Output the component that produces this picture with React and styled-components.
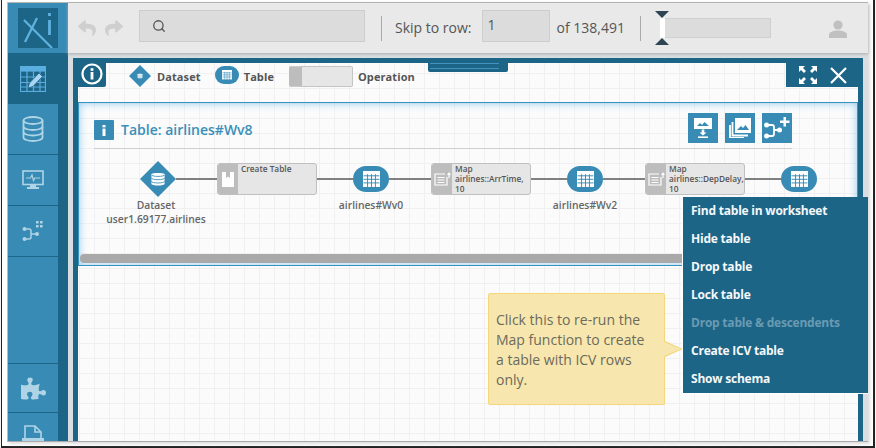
import React from "react";
import styled, { createGlobalStyle } from "styled-components";
import { FaReply, FaShare, FaPuzzlePiece } from "react-icons/fa";
import { Search } from "lucide-react";

const dark = "#1d6587";
const blue = "#378bb5";
const sideIcon = "#afd4e6";

const Global = createGlobalStyle`
  html, body { margin: 0; padding: 0; background: #fff; }
  body { font-family: "Open Sans", "Liberation Sans", sans-serif; }
  * { box-sizing: border-box; }
`;

const Screen = styled.div`
  width: 876px; height: 448px; overflow: hidden; padding-left: 1px; background: #f4f4f4;
`;
const WindowEdge = styled.div`
  width: 874px; height: 448px; display: flex; align-items: flex-start;
  border-left: 1px solid #222; border-right: 2px solid #222; border-bottom: 2px solid #222;
  background: #fff; padding: 2px 0 0 5px;
`;
const App = styled.div`
  position: relative; width: 861px; height: 440px; display: flex; flex: none;
  border-top: 1px solid #b5b5b5; border-bottom: 1px solid #aaa; border-left: 1px solid #bbb;
  box-shadow: 2px 2px 3px #ddd;
`;
const Sidebar = styled.aside`
  width: 60px; flex: none; background: ${dark}; display: flex; flex-direction: column;
`;
const LogoCell = styled.div`
  height: 50px; background: ${blue}; display: flex; justify-content: center; align-items: center; flex: none;
`;
const NavActive = styled.div`
  height: 51px; flex: none; width: 50px; display: flex; align-items: center; justify-content: center;
`;
const NavItem = styled.div`
  height: ${(p) => p.$h || 51}px; flex: none; width: 50px; background: ${blue};
  border-bottom: 1px solid ${dark}; display: flex; align-items: center; justify-content: center; overflow: hidden;
  color: ${sideIcon};
`;
const NavFill = styled.div`
  flex: 1; width: 50px; background: ${blue}; border-bottom: 1px solid ${dark};
`;
const NavCut = styled.div`
  flex: none; height: 28px; width: 50px; background: ${blue}; overflow: hidden; display: flex; justify-content: center; padding-top: 12px;
`;
const Body = styled.div`
  flex: 1; min-width: 0; display: flex; flex-direction: column; background: #d8dee1;
`;
const Header = styled.header`
  height: 50px; flex: none; background: #e9e9e9; display: flex; align-items: center; padding-left: 10px;
  box-shadow: 0 1px 3px #aaa; color: #555; font-size: 14px; position: relative;
`;
const History = styled.div`
  width: 61px; display: flex; gap: 9px; color: #cfcfcf; font-size: 18px; align-items: center; flex: none;
`;
const SearchBox = styled.div`
  width: 226px; height: 32px; background: #dcdcdc; border: 1px solid #cdcdcd; display: flex; align-items: center;
  padding-left: 12px; color: #555; flex: none; margin-top: -4px;
`;
const Divider = styled.div`
  width: 1px; height: 25px; background: #aaa; flex: none; margin: 0 ${(p) => p.$r}px 0 ${(p) => p.$l}px;
`;
const SkipLabel = styled.span`white-space: nowrap; flex: none; margin-top: -1px;`;
const RowInput = styled.div`
  width: 68px; height: 32px; background: #dcdcdc; border: 1px solid #cdcdcd; margin: -4px 7px 0 10px; padding: 4px 0 0 5px; flex: none;
`;
const Slider = styled.div`
  position: relative; width: 110px; height: 20px; background: #dcdcdc; border: 1px solid #d0d0d0; flex: none;
`;
const Handle = styled.div`
  position: absolute; left: -2px; top: -1px; width: 5px; height: 20px; background: #fff;
  &::before, &::after {
    content: ""; position: absolute; left: -5px; border-left: 7px solid transparent; border-right: 7px solid transparent;
  }
  &::before { top: -7px; border-top: 7px solid #2d4452; }
  &::after { bottom: -7px; border-bottom: 7px solid #2d4452; }
`;
const UserSlot = styled.div`margin-left: 58px; display: flex; flex: none; margin-top: 1px;`;

const Panel = styled.main`
  position: relative; margin: 5px 5px 0 5px; flex: 1; min-height: 0; border: 5px solid ${dark}; border-bottom: none;
  background-color: #fbfbfb;
  background-image: linear-gradient(#f0f0f0 1px, transparent 1px), linear-gradient(90deg, #f0f0f0 1px, transparent 1px);
  background-size: 15px 15px; background-position: 1px 10px;
`;
const Legend = styled.div`
  height: 24px; display: flex; align-items: center; font-size: 11px; font-weight: 700; color: #555; letter-spacing: 0.1px;
`;
const InfoTab = styled.div`
  width: 28px; height: 24px; background: ${dark}; display: flex; justify-content: center; border-bottom-right-radius: 2px; flex: none;
  align-self: flex-start; color: #fff;
`;
const LegendDiamond = styled.div`margin: 2px 6px 0 23px; display: flex;`;
const LegendName = styled.span`margin-top: 2px;`;
const LegendPill = styled.div`
  width: 24px; height: 18px; border-radius: 9px; background: ${blue}; margin: 0 5px 0 14px; display: flex; align-items: center; justify-content: center;
`;
const LegendOp = styled.div`
  width: 64px; height: 21px; margin: 3px 5px 0 15px; border: 1px solid #c4c4c4; border-radius: 2px; background: #e6e6e6; flex: none;
  border-left: 13px solid #bdbdbd;
`;
const PullTab = styled.div`
  position: absolute; left: 350px; top: 0; width: 80px; height: 9px; background: ${dark}; border-bottom-left-radius: 2px; border-bottom-right-radius: 2px;
  &::after { content: ""; position: absolute; left: 2px; right: 9px; top: 0; height: 4px; border-bottom: 1px solid #3f93bd; border-top: 1px solid #3f93bd; }
`;
const WinTab = styled.div`
  position: absolute; right: 0; top: 0; width: 72px; height: 24px; background: ${dark}; display: flex; align-items: center; gap: 12px; padding-left: 12px;
`;
const Card = styled.section`
  height: 164px; margin-top: 15px; border: 1px solid #3a92c0; box-shadow: inset 0 0 8px #8fcbf0; display: flex; flex-direction: column; padding: 10px 0 1px 1px;
`;
const CardHead = styled.div`
  margin-left: 14px; width: 698px; height: 36px; border-bottom: 1px solid #cfcfcf; display: flex; align-items: flex-start; flex: none;
`;
const CardInfo = styled.div`
  width: 20px; height: 20px; background: ${blue}; border-radius: 1px; display: flex; align-items: center; justify-content: center; margin-top: 7px; flex: none;
`;
const CardTitle = styled.h2`
  margin: 6px 0 0 7px; font-size: 14px; font-weight: 600; line-height: 22px; color: #3a8fb9; flex: 1;
`;
const ActionGroup = styled.div`display: flex; gap: 7px;`;
const ActionBtn = styled.div`
  width: 30px; height: 30px; background: ${blue}; display: flex; align-items: center; justify-content: center; flex: none;
`;
const Graph = styled.div`
  display: flex; margin: 14px 0 0 60px; align-items: flex-start; flex: none;
`;
const Node = styled.div`
  width: 36px; flex: none; display: flex; flex-direction: column; align-items: center;
`;
const ShapeSlot = styled.div`
  height: 32px; display: flex; align-items: center; justify-content: center;
`;
const NodeLabel = styled.div`
  margin: 3px ${(p) => p.$shift || 0}px 0 0; font-size: 10.3px; line-height: 14px; font-weight: 600; color: #666; white-space: nowrap; text-align: center;
`;
const Pill = styled.div`
  width: 36px; height: 26px; border-radius: 13px; background: ${blue}; display: flex; align-items: center; justify-content: center; flex: none;
`;
const Wire = styled.div`
  width: ${(p) => p.$w}px; height: 2px; margin-top: 15px; background: #808080; flex: none;
`;
const OpBox = styled.div`
  width: 100px; height: 32px; flex: none; display: flex; border: 1px solid #c0c0c0; border-radius: 3px; background: #e6e6e6; overflow: hidden;
`;
const OpIcon = styled.div`
  width: 20px; flex: none; background: #bdbdbd; display: flex; align-items: center; justify-content: center;
`;
const OpText = styled.div`
  padding: 0 0 0 3px; font-size: 8.3px; line-height: 10px; font-weight: 600; color: #555; white-space: nowrap;
`;
const ScrollBar = styled.div`
  margin-top: auto; height: 9px; background: #a9a9a9; border-radius: 4px; margin-right: 1px; margin-bottom: 1px;
`;

const Menu = styled.ul`
  position: absolute; left: 674px; top: 194px; width: 186px; margin: 0; padding: 0; list-style: none; background: ${dark};
  border-left: 1px solid #fff; border-bottom: 1px solid #fff; height: 197px;
`;
const MenuItem = styled.li`
  height: 28px; line-height: 28px; padding-left: 8px; font-size: 12px; font-weight: 700; letter-spacing: -0.22px;
  color: ${(p) => (p.$off ? "#6a9bb2" : "#f4f8fa")};
`;
const Tip = styled.div`
  position: absolute; left: 480px; top: 290px; width: 177px; height: 112px; background: #f7e7ae; border: 1px solid #f5d67a; border-radius: 2px;
  padding: 16px 0 0 7px; font-size: 14px; line-height: 20px; color: #6d6a5c; white-space: nowrap;
  &::before, &::after { content: ""; position: absolute; border-style: solid; border-color: transparent; }
  &::before { left: 176px; top: 47px; border-width: 8px 0 8px 18px; border-left-color: #f5d67a; }
  &::after { left: 175px; top: 48px; border-width: 7px 0 7px 17px; border-left-color: #f7e7ae; }
`;

const Logo = () => (
  <svg width="40" height="40" viewBox="0 0 40 40" style={{ background: dark }}>
    <g stroke="#5fb2de" strokeWidth="2.2" fill="none">
      <path d="M6 12 L34 40" />
      <path d="M19 10 L7 34" />
      <path d="M31.5 12 V27" strokeWidth="2.8" />
      <path d="M31.5 5 V8" strokeWidth="2.8" />
    </g>
  </svg>
);
const SheetIcon = () => (
  <svg width="26" height="26" viewBox="0 0 26 26" fill="none" stroke="#5aaee0" strokeWidth="1.2">
    <rect x="0.5" y="0.5" width="25" height="25" />
    <rect x="0" y="0" width="26" height="5" fill="#5aaee0" />
    <path d="M0 11H26M0 16.5H26M0 21H26M7 5V26M13.5 5V26M20 5V26" />
    <path d="M8 22 L9.5 17 L19 7 L22.5 10.5 L13 20.5Z" fill="#a8d6f2" stroke={dark} strokeWidth="0.8" />
  </svg>
);
const DbIcon = () => (
  <svg width="22" height="26" viewBox="0 0 22 26" fill="none" stroke={sideIcon} strokeWidth="1.8">
    <ellipse cx="11" cy="4.5" rx="9.5" ry="3.5" />
    <path d="M1.5 4.5V21.5C1.5 23.5 6 25 11 25S20.5 23.5 20.5 21.5V4.5" />
    <path d="M1.5 10.5C1.5 12.5 6 14 11 14S20.5 12.5 20.5 10.5M1.5 16C1.5 18 6 19.5 11 19.5S20.5 18 20.5 16" />
  </svg>
);
const MonitorIcon = () => (
  <svg width="22" height="20" viewBox="0 0 22 20" fill="none" stroke={sideIcon}>
    <rect x="1" y="1" width="20" height="13.5" strokeWidth="1.6" />
    <path d="M4 8H8.5L10 5L11.5 10.5L12.8 8H18" strokeWidth="1.2" />
    <path d="M8 15H14V17H17V19H5V17H8Z" fill={sideIcon} stroke="none" />
  </svg>
);
const GraphDots = () => (
  <svg width="22" height="22" viewBox="0 0 22 22" fill={sideIcon} stroke="none">
    <circle cx="2.5" cy="9" r="2" />
    <circle cx="2.5" cy="19" r="2" />
    <circle cx="15" cy="14" r="2" />
    <path d="M2.5 9H7Q9 9 9 11V17Q9 19 7 19H2.5M9 14H15" fill="none" stroke={sideIcon} strokeWidth="1.5" />
    <path d="M14 1h2.6v2.6H14zM18 1h2.6v2.6H18zM14 5h2.6v2.6H14zM18 5h2.6v2.6H18z" />
  </svg>
);
const FileCut = () => (
  <svg width="22" height="26" viewBox="0 0 22 26" fill="none" stroke={sideIcon} strokeWidth="1.6">
    <path d="M3 13V1H13L19 7V13" />
    <path d="M13 1V7H19" />
    <rect x="0" y="13" width="22" height="10" fill={sideIcon} stroke="none" />
  </svg>
);
const InfoRing = () => (
  <svg width="22" height="22" viewBox="0 0 22 22">
    <circle cx="11" cy="11" r="9.5" fill="none" stroke="#fff" strokeWidth="2.2" />
    <rect x="9.6" y="9" width="2.8" height="7.5" fill="#fff" />
    <rect x="9.6" y="5.2" width="2.8" height="2.6" fill="#fff" />
  </svg>
);
const InfoGlyph = () => (
  <svg width="4" height="11" viewBox="0 0 4 11" fill="#fff">
    <rect x="0.5" y="0" width="3" height="2.4" />
    <rect x="0.5" y="3.6" width="3" height="7.4" />
  </svg>
);
const TableGlyph = ({ s = 16 }) => (
  <svg width={s} height={s * 0.94} viewBox="0 0 16 15" fill="none">
    <rect x="0" y="0" width="16" height="15" fill="#fff" />
    <path d="M0.5 4.5H15.5M0.5 7.8H15.5M0.5 11.2H15.5M4.3 3V15M8 3V15M11.7 3V15" stroke={blue} strokeWidth="0.9" />
  </svg>
);
const DbInner = ({ s }) => (
  <g transform={`scale(${s / 16})`} stroke={blue} strokeWidth="0.9">
    <path d="M1 3C1 1 15 1 15 3V13C15 15.5 1 15.5 1 13Z" stroke="none" fill="#fff" />
    <path d="M1 3.5C1 5.8 15 5.8 15 3.5M1 7C1 9.3 15 9.3 15 7M1 10.5C1 12.8 15 12.8 15 10.5" fill="none" />
  </g>
);
const Diamond = ({ size, glyph }) => (
  <svg width={size} height={size} viewBox="0 0 36 36" style={{ flex: "none" }}>
    <path d="M18 0 L36 18 L18 36 L0 18Z" fill={blue} />
    <g transform={`translate(${18 - glyph / 2} ${18 - glyph / 2})`}>
      <DbInner s={glyph} />
    </g>
  </svg>
);
const CreateGlyph = () => (
  <svg width="12" height="15" viewBox="0 0 12 15">
    <rect width="12" height="15" fill="#fff" />
    <path d="M4 0H8V6L6 4.6L4 6Z" fill="#bdbdbd" />
  </svg>
);
const MapGlyph = () => (
  <svg width="17" height="14" viewBox="0 0 17 14" fill="none" stroke="#fff" strokeWidth="1.2">
    <path d="M11 2H1V13H13V5" />
    <path d="M3.5 5.5H10.5M3.5 8H10.5M3.5 10.5H10.5" />
    <path d="M15 0 L17 3H15.6V6H14.4V3H13Z" fill="#fff" stroke="none" />
  </svg>
);
const ExportBtn = () => (
  <svg width="20" height="20" viewBox="0 0 20 20" fill="#fff">
    <path d="M1 0H19V11H1Z" />
    <path d="M4 8L7 5L9 7L11.5 4L16 8Z" fill={blue} />
    <path d="M8.7 11.5H11.3V14.5H13.5L10 17.5L6.5 14.5H8.7Z" />
    <rect x="5" y="18.4" width="10" height="1.6" />
  </svg>
);
const ImagesBtn = () => (
  <svg width="22" height="20" viewBox="0 0 22 20" fill="none">
    <path d="M6 0H22V15H6Z" fill="#fff" />
    <path d="M8 12L12 8L14 10L16.5 7L20 12Z" fill={blue} />
    <path d="M3.5 4V17.5H19M1 7V20H15" stroke="#fff" strokeWidth="1.8" />
  </svg>
);
const GraphPlusBtn = () => (
  <svg width="26" height="22" viewBox="0 0 26 22" fill="#fff" stroke="none">
    <circle cx="2.6" cy="8" r="2.5" />
    <circle cx="2.6" cy="19" r="2.5" />
    <circle cx="15.5" cy="13" r="2.5" />
    <path d="M3 8H8Q10 8 10 10V17Q10 19 8 19H3M10 13H15" fill="none" stroke="#fff" strokeWidth="1.8" />
    <path d="M19.5 0H22V3.5H25.5V6H22V9.5H19.5V6H16V3.5H19.5Z" />
  </svg>
);
const ExpandIcon = () => (
  <svg width="20" height="20" viewBox="0 0 20 20" fill="#fff" stroke="none">
    <path d="M1 1H7L5 3L8 6L6 8L3 5L1 7ZM19 1V7L17 5L14 8L12 6L15 3L13 1ZM1 19V13L3 15L6 12L8 14L5 17L7 19ZM19 19H13L15 17L12 14L14 12L17 15L19 13Z" />
  </svg>
);
const CloseIcon = () => (
  <svg width="17" height="17" viewBox="0 0 17 17" stroke="#fff" strokeWidth="2.2" fill="none">
    <path d="M1 1L16 16M16 1L1 16" />
  </svg>
);
const UserIcon = () => (
  <svg width="18" height="18" viewBox="0 0 18 18" fill="#c0c0c0">
    <circle cx="9" cy="5" r="4.6" />
    <path d="M0 18V15C0 12 4 10.5 9 10.5S18 12 18 15V18Z" />
  </svg>
);

const menuItems = [
  ["Find table in worksheet"], ["Hide table"], ["Drop table"], ["Lock table"],
  ["Drop table & descendents", true], ["Create ICV table"], ["Show schema"],
];

const PillNode = ({ label }) => (
  <Node>
    <ShapeSlot><Pill><TableGlyph s={17} /></Pill></ShapeSlot>
    {label && <NodeLabel>{label}</NodeLabel>}
  </Node>
);
const Operation = ({ icon, children }) => (
  <OpBox><OpIcon>{icon}</OpIcon><OpText>{children}</OpText></OpBox>
);

export default function Page() {
  return (
    <Screen>
      <Global />
      <WindowEdge>
        <App>
          <Sidebar>
            <LogoCell><Logo /></LogoCell>
            <NavActive><SheetIcon /></NavActive>
            <NavItem><DbIcon /></NavItem>
            <NavItem><MonitorIcon /></NavItem>
            <NavItem><GraphDots /></NavItem>
            <NavFill />
            <NavItem $h={49}><FaPuzzlePiece size={25} /></NavItem>
            <NavCut><FileCut /></NavCut>
          </Sidebar>
          <Body>
            <Header>
              <History><FaReply /><FaShare /></History>
              <SearchBox><Search size={14} strokeWidth={2.2} /></SearchBox>
              <Divider $l={16} $r={13} />
              <SkipLabel>Skip to row:</SkipLabel>
              <RowInput>1</RowInput>
              <SkipLabel>of 138,491</SkipLabel>
              <Divider $l={15} $r={20} />
              <Slider><Handle /></Slider>
              <UserSlot><UserIcon /></UserSlot>
            </Header>
            <Panel>
              <Legend>
                <InfoTab><InfoRing /></InfoTab>
                <LegendDiamond><Diamond size={22} glyph={9} /></LegendDiamond>
                <LegendName>Dataset</LegendName>
                <LegendPill><TableGlyph s={10} /></LegendPill>
                <LegendName>Table</LegendName>
                <LegendOp />
                <LegendName>Operation</LegendName>
              </Legend>
              <PullTab />
              <WinTab><ExpandIcon /><CloseIcon /></WinTab>
              <Card>
                <CardHead>
                  <CardInfo><InfoGlyph /></CardInfo>
                  <CardTitle>Table: airlines#Wv8</CardTitle>
                  <ActionGroup>
                    <ActionBtn><ExportBtn /></ActionBtn>
                    <ActionBtn><ImagesBtn /></ActionBtn>
                    <ActionBtn><GraphPlusBtn /></ActionBtn>
                  </ActionGroup>
                </CardHead>
                <Graph>
                  <Node>
                    <ShapeSlot><Diamond size={36} glyph={15} /></ShapeSlot>
                    <NodeLabel $shift={4}>Dataset<br />user1.69177.airlines</NodeLabel>
                  </Node>
                  <Wire $w={41} />
                  <Operation icon={<CreateGlyph />}>Create Table</Operation>
                  <Wire $w={36} />
                  <PillNode label="airlines#Wv0" />
                  <Wire $w={42} />
                  <Operation icon={<MapGlyph />}>Map<br />airlines::ArrTime,<br />10</Operation>
                  <Wire $w={36} />
                  <PillNode label="airlines#Wv2" />
                  <Wire $w={42} />
                  <Operation icon={<MapGlyph />}>Map<br />airlines::DepDelay,<br />10</Operation>
                  <Wire $w={36} />
                  <PillNode />
                </Graph>
                <ScrollBar />
              </Card>
            </Panel>
          </Body>
          <Tip>Click this to re-run the<br />Map function to create<br />a table with ICV rows<br />only.</Tip>
          <Menu>
            {menuItems.map(([t, off]) => <MenuItem key={t} $off={off}>{t}</MenuItem>)}
          </Menu>
        </App>
      </WindowEdge>
    </Screen>
  );
}
